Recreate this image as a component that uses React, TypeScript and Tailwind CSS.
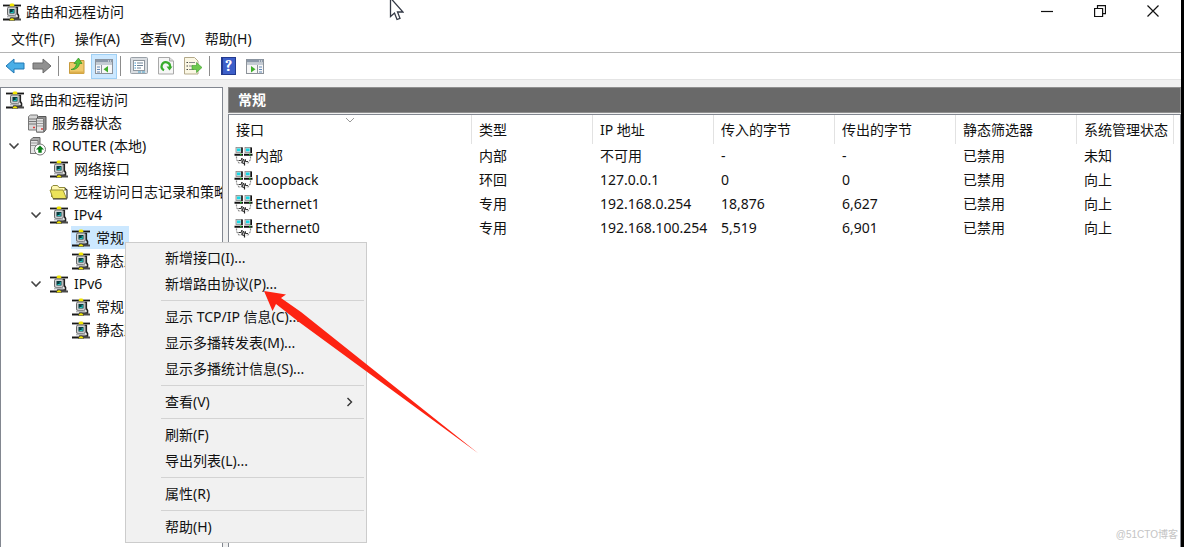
import { ReactNode } from "react";

const RouterIcon = () => (
  <svg viewBox="0 0 20 20" className="h-5 w-5 shrink-0" aria-hidden="true">
    <path d="M1 3.5h18" stroke="#1a1a1a" strokeWidth="1.800" />
    <path d="M1 17.500h7" stroke="#1a1a1a" strokeWidth="2" />
    <path d="M12 17.500h7" stroke="#4a4a4a" strokeWidth="2" />
    <path d="M7.500 3.500l1-2h3l1 2-1 1h-3z" fill="#f2e600" />
    <path d="M14 5.500h1.300v6l1.200 2v2.500H8" fill="none" stroke="#222" strokeWidth="1.600" />
    <rect x="5.500" y="5" width="8.800" height="8.500" rx="1.600" fill="#cdd0d2" stroke="#666" />
    <rect x="7.500" y="7" width="5" height="4.500" fill="#073b3e" />
    <path d="M8.500 10h2.200V8h1v3H8.500z" fill="#1fc5c0" />
    <path d="M5 14.500h9.500" stroke="#b4b7ba" strokeWidth="1.800" />
    <path d="M7.500 18.500c0-1.800 1-2.600 2.500-2.600s2.500.8 2.500 2.600z" fill="#f2e600" stroke="#222" strokeWidth=".5" />
  </svg>
);

const ServersIcon = () => (
  <svg viewBox="0 0 20 20" className="h-5 w-5 shrink-0" aria-hidden="true">
    <path d="M1.500 3.500l2-1.500h7v15h-9z" fill="#d6d6d6" stroke="#777" />
    <path d="M2 6h7M2 8.500h7M2 11h7" stroke="#777" />
    <path d="M9.500 5.500l2-2h7.500v13l-2 2.500H9.500z" fill="#8d8d8d" stroke="#555" />
    <path d="M9.500 5.500h7V19h-7z" fill="#e4e4e4" stroke="#777" />
    <path d="M10 8h6M10 10.500h6M10 13h6" stroke="#999" />
    <path d="M6 14.500h2M14 16h2" stroke="#e23b3b" strokeWidth="1.500" />
  </svg>
);

const ServerUpIcon = () => (
  <svg viewBox="0 0 20 20" className="h-5 w-5 shrink-0" aria-hidden="true">
    <path d="M3.500 4L6 1.500h7V15l-2 2.500H3.500z" fill="#a9a9a9" stroke="#666" />
    <path d="M3.500 4.500h7.500v13H3.500z" fill="#e4e4e4" stroke="#777" />
    <path d="M4 7h6.500M4 9.500h6.500" stroke="#999" />
    <circle cx="13" cy="13.500" r="5.500" fill="#fff" stroke="#777" />
    <path d="M13 9.500l4 4h-2.300v3.300h-3.400v-3.300H9z" fill="#0a7d17" />
  </svg>
);

const FolderIcon = () => (
  <svg viewBox="0 0 20 20" className="h-5 w-5 shrink-0" aria-hidden="true">
    <path d="M2.500 15V5l1.500-1.500h4.500L10 5.500h6V9" fill="#fff8b0" stroke="#8f8a3a" />
    <path d="M1 8h13l3.500 8.500H4z" fill="#ece35a" stroke="#99923a" />
    <path d="M16 6.500l2 1.500v8.500" fill="none" stroke="#333" strokeWidth="1.200" />
    <path d="M4 17h14" stroke="#333" />
  </svg>
);

const InterfaceIcon = () => (
  <svg viewBox="0 0 19 20" className="h-5 w-[19px] shrink-0" aria-hidden="true">
    <g stroke="#888" strokeWidth=".8">
      <rect x="2" y="1.500" width="6" height="5" fill="#d8dbdd" />
      <rect x="11" y="1.500" width="6" height="5" fill="#d8dbdd" />
    </g>
    <path d="M3 2.500h3.500v2.800H3zM12 2.500h3.500v2.800H12z" fill="#16d9e6" />
    <path d="M8 1.500v5.500M17.200 1.500v5.500" stroke="#111" strokeWidth="1.600" />
    <path d="M.500 8.700h8.500M10 8.700h8.500" stroke="#111" strokeWidth="2" />
    <path d="M1 7.500h6.500M10.500 7.500h6.500" stroke="#c4c4c4" />
    <path d="M6 8.500h1.500M15 8.500h1.500" stroke="#17b520" strokeWidth="1.300" />
    <path d="M2.500 10.500v3l2.500 3.500h2.500M16.500 10.500v3L14 17h-2" fill="none" stroke="#888" strokeWidth="1.200" strokeDasharray="2 1" />
    <path d="M4.500 14.500H7l1-2.500v5l1.700-4 .8 3.500 1-3v2H14" fill="none" stroke="#333" />
    <path d="M8.500 17.500l2-.5v2.500" fill="none" stroke="#222" strokeWidth="1.200" />
  </svg>
);

const ChevronDown = () => (
  <svg viewBox="0 0 12 8" className="h-2 w-3" aria-hidden="true">
    <path d="M1.500 1.500L6 6l4.500-4.500" fill="none" stroke="#444" strokeWidth="1.600" />
  </svg>
);

const ArrowGlyph = ({ back }: { back?: boolean }) => (
  <svg viewBox="0 0 20 18" className="h-[18px] w-5" aria-hidden="true">
    {back ? (
      <path d="M1 9l8-7v4h10v6H9v4z" fill="#4aaee6" stroke="#2178b5" strokeLinejoin="round" />
    ) : (
      <path d="M19 9l-8-7v4H1v6h10v4z" fill="#909090" stroke="#6a6a6a" strokeLinejoin="round" />
    )}
  </svg>
);

const UpFolderGlyph = () => (
  <svg viewBox="0 0 18 18" className="h-[18px] w-[18px]" aria-hidden="true">
    <path d="M1.500 5.500h8l1.500-2h5v13H1.500z" fill="#efca6c" stroke="#c79b3c" />
    <path d="M2 15.500h14" stroke="#dcae4b" strokeWidth="2" />
    <path d="M3 12.500c3-.5 5-2.500 5.500-6H6L10.500 1 14 6.500h-2.500c-.5 4-4 6.500-8.500 6z" fill="#56c43a" stroke="#2f8f22" strokeWidth=".7" />
  </svg>
);

const PaneGlyph = ({ right }: { right?: boolean }) => (
  <svg viewBox="0 0 20 18" className="h-[18px] w-5" aria-hidden="true">
    <rect x="1.500" y="2.500" width="17" height="14" fill="#f7f7f7" stroke="#8c9299" />
    <path d="M2 4h16" stroke="#8b98a8" strokeWidth="3" />
    <path d="M14 4h1M16 4h1" stroke="#fff" />
    <path d="M2 7h16" stroke="#c5ccd4" strokeWidth="2" />
    {right ? (
      <>
        <path d="M12.500 8v8" stroke="#8c9299" />
        <path d="M14 10h3M14 12.500h3M14 15h3" stroke="#6289b8" />
        <path d="M6 9l4.500 3.200L6 15.500z" fill="#3fae2a" />
      </>
    ) : (
      <>
        <path d="M7.500 8v8" stroke="#8c9299" />
        <path d="M3 10h3M3 12.500h3M3 15h3" stroke="#6289b8" />
        <path d="M14 9l-4.500 3.200L14 15.500z" fill="#3fae2a" />
      </>
    )}
  </svg>
);

const PropertiesGlyph = () => (
  <svg viewBox="0 0 18 18" className="h-[18px] w-[18px]" aria-hidden="true">
    <rect x=".5" y=".5" width="17" height="16" rx="1" fill="#d9dde1" stroke="#9aa1a8" />
    <rect x="3.500" y="3.500" width="11" height="10" fill="#fff" stroke="#8f979f" />
    <path d="M7 6h6M7 8.500h6M7 11h4" stroke="#6d8296" />
    <path d="M4.500 6H6M4.500 8.500H6M4.500 11H6" stroke="#4a9cd0" />
    <path d="M8 15h3M12 15h3" stroke="#48a0c8" />
  </svg>
);

const RefreshGlyph = () => (
  <svg viewBox="0 0 18 18" className="h-[18px] w-[18px]" aria-hidden="true">
    <path d="M1.500 .5h11l4 3.500v13h-15z" fill="#f6f6f6" stroke="#a9a9a9" />
    <path d="M12.500 .5V4h4" fill="#ddd" stroke="#a9a9a9" />
    <path d="M7 13.200A4.200 4.200 0 1 1 13 10" fill="none" stroke="#38ab2c" strokeWidth="2.200" />
    <path d="M9.500 9.500h6l-3 4z" fill="#38ab2c" />
  </svg>
);

const ExportGlyph = () => (
  <svg viewBox="0 0 20 18" className="h-[18px] w-5" aria-hidden="true">
    <path d="M1.500 .5h10l3.500 3.500v13H1.500z" fill="#fbf7e4" stroke="#b3a98a" />
    <path d="M3.500 5.500H5M3.500 9H5M3.500 12.500H5" stroke="#444" />
    <path d="M6 5.500h6M6 9h4M6 12.500h5" stroke="#8a8a8a" />
    <path d="M9 8.500h4.500V5.500L19 10.500l-5.500 5v-3H9z" fill="#6dc94c" stroke="#3b9c2c" strokeWidth=".6" />
  </svg>
);

const HelpGlyph = () => (
  <span className="flex h-[18px] w-[15px] items-center justify-center border border-l-2 border-[#233a8f] bg-[#3d5fc9] font-serif text-[16px] leading-none font-bold text-white">
    ?
  </span>
);

type ToolProps = { label: string; active?: boolean; children: ReactNode };

const Tool = ({ label, active, children }: ToolProps) => (
  <button
    aria-label={label}
    className={`flex h-[25px] w-[26px] items-center justify-center ${
      active ? "border border-[#9fd0f5] bg-[#cce8ff]" : ""
    }`}
  >
    {children}
  </button>
);

const ToolDivider = () => <div className="mr-1 ml-[2px] h-5 w-px bg-[#8c8c8c]" />;

type NodeProps = {
  label: string;
  icon: ReactNode;
  root?: boolean;
  open?: boolean;
  selected?: boolean;
  children?: ReactNode;
};

const TreeNode = ({ label, icon, root, open, selected, children }: NodeProps) => (
  <li>
    <div className="flex h-[23px] items-center">
      {!root && (
        <span className="flex w-[22px] shrink-0 justify-center pr-1">
          {open && <ChevronDown />}
        </span>
      )}
      <button
        className={`flex h-full items-center whitespace-nowrap ${
          selected ? "bg-[#cce8ff]" : ""
        }`}
      >
        {icon}
        <span className="px-[5px]">{label}</span>
      </button>
    </div>
    {children && <ul className={root ? "" : "pl-[22px]"}>{children}</ul>}
  </li>
);

const menus = ["文件(F)", "操作(A)", "查看(V)", "帮助(H)"];

const columns = [
  { name: "接口", width: "w-[243px]" },
  { name: "类型", width: "w-[121px]" },
  { name: "IP 地址", width: "w-[121px]" },
  { name: "传入的字节", width: "w-[121px]" },
  { name: "传出的字节", width: "w-[121px]" },
  { name: "静态筛选器", width: "w-[121px]" },
  { name: "系统管理状态", width: "w-[97px]" },
];

const interfaces = [
  ["内部", "内部", "不可用", "-", "-", "已禁用", "未知"],
  ["Loopback", "环回", "127.0.0.1", "0", "0", "已禁用", "向上"],
  ["Ethernet1", "专用", "192.168.0.254", "18,876", "6,627", "已禁用", "向上"],
  ["Ethernet0", "专用", "192.168.100.254", "5,519", "6,901", "已禁用", "向上"],
];

const contextGroups = [
  ["新增接口(I)...", "新增路由协议(P)..."],
  ["显示 TCP/IP 信息(C)...", "显示多播转发表(M)...", "显示多播统计信息(S)..."],
  ["查看(V)"],
  ["刷新(F)", "导出列表(L)..."],
  ["属性(R)"],
  ["帮助(H)"],
];

const TitleBar = () => (
  <header className="flex h-[25px] items-start justify-between pr-[2px]">
    <div className="flex h-[23px] items-center gap-1 pl-[2px]">
      <RouterIcon />
      <h1>路由和远程访问</h1>
    </div>
    <div className="flex text-[#111]">
      <button aria-label="最小化" className="flex h-[21px] w-[53px] items-center justify-center">
        <svg viewBox="0 0 12 12" className="h-3 w-3">
          <path d="M0 6.500h12" stroke="currentColor" strokeWidth="1.200" />
        </svg>
      </button>
      <button aria-label="还原" className="flex h-[21px] w-[53px] items-center justify-center">
        <svg viewBox="0 0 12 12" className="h-3 w-3">
          <path d="M.6 3.500h8v8h-8zM3.500 3V.6h8v8H9" fill="none" stroke="currentColor" strokeWidth="1.200" />
        </svg>
      </button>
      <button aria-label="关闭" className="flex h-[21px] w-[53px] items-center justify-center">
        <svg viewBox="0 0 12 12" className="h-3 w-3">
          <path d="M.5.5l11 11M11.500.5l-11 11" stroke="currentColor" strokeWidth="1.200" />
        </svg>
      </button>
    </div>
  </header>
);

const ToolBar = () => (
  <div className="flex h-[27px] items-center gap-px border-t border-[#b4b4b4] pl-[2px]">
    <Tool label="后退"><ArrowGlyph back /></Tool>
    <Tool label="前进"><ArrowGlyph /></Tool>
    <ToolDivider />
    <Tool label="向上一级"><UpFolderGlyph /></Tool>
    <Tool label="显示控制台树" active><PaneGlyph /></Tool>
    <ToolDivider />
    <Tool label="属性"><PropertiesGlyph /></Tool>
    <Tool label="刷新"><RefreshGlyph /></Tool>
    <Tool label="导出列表"><ExportGlyph /></Tool>
    <ToolDivider />
    <Tool label="帮助"><HelpGlyph /></Tool>
    <Tool label="显示操作窗格"><PaneGlyph right /></Tool>
  </div>
);

const Tree = () => (
  <nav className="w-[223px] shrink-0 overflow-hidden border border-b-0 border-[#828790] bg-white pl-1">
    <ul>
      <TreeNode root label="路由和远程访问" icon={<RouterIcon />}>
        <TreeNode label="服务器状态" icon={<ServersIcon />} />
        <TreeNode open label="ROUTER (本地)" icon={<ServerUpIcon />}>
          <TreeNode label="网络接口" icon={<RouterIcon />} />
          <TreeNode label="远程访问日志记录和策略" icon={<FolderIcon />} />
          <TreeNode open label="IPv4" icon={<RouterIcon />}>
            <TreeNode selected label="常规" icon={<RouterIcon />} />
            <TreeNode label="静态路由" icon={<RouterIcon />} />
          </TreeNode>
          <TreeNode open label="IPv6" icon={<RouterIcon />}>
            <TreeNode label="常规" icon={<RouterIcon />} />
            <TreeNode label="静态路由" icon={<RouterIcon />} />
          </TreeNode>
        </TreeNode>
      </TreeNode>
    </ul>
  </nav>
);

const InterfaceTable = () => (
  <div className="flex-1 overflow-hidden border border-b-0 border-[#828790] bg-white">
    <table className="w-full table-fixed border-separate border-spacing-0 text-left whitespace-nowrap">
      <thead>
        <tr>
          {columns.map((col, i) => (
            <th
              key={col.name}
              className={`relative h-[29px] border-r border-[#e2e2e2] pl-[7px] font-normal ${col.width}`}
            >
              {col.name}
              {i === 0 && (
                <svg viewBox="0 0 10 6" className="absolute inset-x-0 top-[2px] mx-auto h-[6px] w-[10px]" aria-hidden="true">
                  <path d="M1 1l4 4 4-4" fill="none" stroke="#999" />
                </svg>
              )}
            </th>
          ))}
          <td />
        </tr>
      </thead>
      <tbody>
        {interfaces.map((row) => (
          <tr key={row[0]}>
            {row.map((cell, i) => (
              <td key={i} className={`h-6 leading-6 ${i === 0 ? "pl-[5px]" : "pl-[7px]"}`}>
                {i === 0 ? (
                  <div className="flex items-center gap-[2px]">
                    <InterfaceIcon />
                    <span>{cell}</span>
                  </div>
                ) : (
                  cell
                )}
              </td>
            ))}
          </tr>
        ))}
      </tbody>
    </table>
  </div>
);

const ContextMenu = () => (
  <div
    role="menu"
    className="absolute top-[242px] left-[125px] w-[242px] border border-[#cccccc] bg-[#f1f1f1] py-[2px] pr-[2px]"
  >
    {contextGroups.map((group, i) => (
      <div key={i}>
        {i > 0 && <div className="my-[3px] ml-[35px] h-px bg-[#d3d3d3]" />}
        {group.map((item) => (
          <button
            key={item}
            role="menuitem"
            className="flex h-[26px] w-full items-center justify-between pr-[10px] pb-px pl-[39px] text-left"
          >
            {item}
            {item === "查看(V)" && (
              <svg viewBox="0 0 8 12" className="h-3 w-2" aria-hidden="true">
                <path d="M1.500 2l4 4-4 4" fill="none" stroke="#333" strokeWidth="1.400" />
              </svg>
            )}
          </button>
        ))}
      </div>
    ))}
  </div>
);

export default function App() {
  return (
    <div className="relative min-h-screen bg-black pr-[3px] font-['Noto_Sans','Noto_Sans_CJK_SC',sans-serif] text-[14px] leading-5 text-[#111]">
      <div className="flex min-h-screen flex-col bg-white">
        <TitleBar />
        <div className="flex h-[27px] items-center gap-5 pl-[11px]">
          {menus.map((menu) => (
            <button key={menu}>{menu}</button>
          ))}
        </div>
        <ToolBar />
        <main className="flex flex-1 gap-[5px] border-t border-[#e4e4e4] bg-[#f0f0f0] pt-[7px]">
          <Tree />
          <section className="flex min-w-0 flex-1 flex-col gap-px">
            <h2 className="flex h-[26px] items-center border border-[#8f8f8f] bg-[#696969] pl-[9px] font-bold text-white">
              常规
            </h2>
            <InterfaceTable />
          </section>
        </main>
      </div>

      <ContextMenu />

      <svg viewBox="0 0 215 163" className="pointer-events-none absolute top-[291px] left-[264px] h-[163px] w-[215px]" aria-hidden="true">
        <path d="M0 0L22 3.500 17 7l20 14 177.500 141.500L35 31 12 13 8.500 20z" fill="#fd2312" />
      </svg>

      <svg viewBox="0 0 15 21" className="pointer-events-none absolute top-0 left-[389px] h-[21px] w-[15px]" aria-hidden="true">
        <path d="M1.500-2v18.500l4-3.500 2.500 6.500 3-1.200-2.500-6.300h5.500z" fill="#fff" stroke="#333845" strokeWidth="1.300" />
      </svg>

      <p className="absolute right-[6px] bottom-1 font-['Liberation_Sans','Noto_Sans_CJK_SC',sans-serif] text-[10px] leading-4 text-[#c4c4c4]">
        @51CTO博客
      </p>
    </div>
  );
}
